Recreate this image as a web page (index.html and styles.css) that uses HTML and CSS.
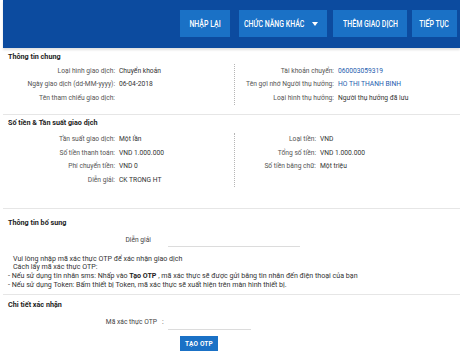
FILE: index.html
```html
<!DOCTYPE html>
<html lang="vi">
<head>
    <meta charset="UTF-8">
    <meta name="viewport" content="width=device-width, initial-scale=1.0">
    <title>Xác nhận giao dịch</title>
    <link rel="stylesheet" href="styles.css">
</head>
<body>
    <div class="toolbar">
        <button class="btn btn-reset"><span class="btn-text">NHẬP LẠI</span></button>
        <button class="btn btn-menu"><span class="btn-text">CHỨC NĂNG KHÁC</span>
            <svg class="caret" width="6" height="4" viewBox="0 0 6 4"><path d="M0 0h6L3 4z" fill="#fff"/></svg>
        </button>
        <button class="btn btn-add"><span class="btn-text">THÊM GIAO DỊCH</span></button>
        <button class="btn btn-next"><span class="btn-text">TIẾP TỤC</span></button>
    </div>

    <div class="content">
        <div class="section section-general">
            <h2 class="section-title">Thông tin chung</h2>
            <div class="info-grid">
                <div class="info-col">
                    <div class="row"><span class="label">Loại hình giao dịch:</span><span class="value">Chuyển khoản</span></div>
                    <div class="row"><span class="label">Ngày giao dịch (dd-MM-yyyy):</span><span class="value">06-04-2018</span></div>
                    <div class="row"><span class="label">Tên tham chiếu giao dịch:</span><span class="value"></span></div>
                </div>
                <div class="info-col info-col-right">
                    <div class="row"><span class="label">Tài khoản chuyển:</span><span class="value link">060003059319</span></div>
                    <div class="row"><span class="label">Tên gợi nhớ Người thụ hưởng:</span><span class="value link">HO THI THANH BINH</span></div>
                    <div class="row"><span class="label">Loại hình thụ hưởng:</span><span class="value">Người thụ hưởng đã lưu</span></div>
                </div>
            </div>
        </div>

        <div class="section section-amount">
            <h2 class="section-title">Số tiền &amp; Tần suất giao dịch</h2>
            <div class="info-grid">
                <div class="info-col">
                    <div class="row"><span class="label">Tần suất giao dịch:</span><span class="value">Một lần</span></div>
                    <div class="row"><span class="label">Số tiền thanh toán:</span><span class="value">VND 1.000.000</span></div>
                    <div class="row"><span class="label">Phí chuyển tiền:</span><span class="value">VND 0</span></div>
                    <div class="row"><span class="label">Diễn giải:</span><span class="value">CK TRONG HT</span></div>
                </div>
                <div class="info-col info-col-right">
                    <div class="row"><span class="label">Loại tiền:</span><span class="value">VND</span></div>
                    <div class="row"><span class="label">Tổng số tiền:</span><span class="value">VND 1.000.000</span></div>
                    <div class="row"><span class="label">Số tiền bằng chữ:</span><span class="value">Một triệu</span></div>
                </div>
            </div>
        </div>

        <div class="section section-extra">
            <h2 class="section-title">Thông tin bổ sung</h2>
            <div class="field-row">
                <label class="field-label extra-label">Diễn giải</label>
                <input class="field-input extra-input" type="text">
            </div>
            <div class="note">
                <p class="indent">Vui lòng nhập mã xác thực OTP để xác nhận giao dịch</p>
                <p class="indent">Cách lấy mã xác thực OTP:</p>
                <p>- Nếu sử dụng tin nhắn sms: Nhấp vào <b>Tạo OTP</b> , mã xác thực sẽ được gửi bằng tin nhắn đến điện thoại của bạn</p>
                <p>- Nếu sử dụng Token: Bấm thiết bị Token, mã xác thực sẽ xuất hiện trên màn hình thiết bị.</p>
            </div>
        </div>

        <div class="section section-confirm">
            <h2 class="section-title">Chi tiết xác nhận</h2>
            <div class="field-row">
                <label class="field-label otp-label">Mã xác thực OTP</label>
                <span class="colon">:</span>
                <input class="field-input otp-input" type="text">
            </div>
            <button class="btn-otp">TẠO OTP</button>
        </div>
    </div>
</body>
</html>
```

FILE: styles.css
```css
* {
    margin: 0;
    padding: 0;
    box-sizing: border-box;
}

body {
    font-family: Roboto, 'Liberation Sans', sans-serif;
    font-size: 6.7px;
    color: #333;
    background-color: #fff;
    overflow: hidden;
}

.toolbar {
    height: 48px;
    margin-left: 3px;
    background-color: #0c4b9f;
    display: flex;
    justify-content: flex-end;
    align-items: center;
    padding-right: 3px;
    box-shadow: 0 2px 2px rgba(0, 0, 0, 0.12);
}

.btn {
    height: 27px;
    margin-top: -1px;
    border: none;
    background-color: #1a71c6;
    color: #fff;
    font-family: Roboto, sans-serif;
    font-size: 8.5px;
    font-weight: 500;
    display: flex;
    justify-content: center;
    align-items: center;
    white-space: nowrap;
}

/* the toolbar font is a condensed face */
.btn-text {
    display: inline-block;
    transform: scaleX(0.82);
}

.btn-reset {
    width: 50px;
    margin-right: 9px;
}

.btn-menu {
    width: 88px;
    margin-right: 6px;
    justify-content: flex-start;
    padding-left: 5px;
    padding-right: 9px;
}

.btn-menu .btn-text {
    transform-origin: left center;
    margin-right: -14px;
}

.btn-menu .caret {
    flex-shrink: 0;
    margin-left: auto;
}

.btn-add {
    width: 74px;
    margin-right: 5px;
}

.btn-next {
    width: 45px;
}

.content {
    margin-left: 3px;
}

.section {
    border-bottom: 1px solid #e6e6e6;
}

.section-title {
    font-size: 7.2px;
    font-weight: 700;
    color: #222;
    line-height: 10px;
    padding-left: 5px;
}

.section-general {
    padding-top: 4px;
    padding-bottom: 8px;
}

.section-amount {
    padding-top: 3px;
}

.section-extra {
    padding-top: 9px;
    padding-bottom: 1px;
}

.section-confirm {
    padding-top: 5px;
    border-bottom: none;
}

.info-grid {
    display: grid;
    grid-template-columns: 231px 1fr;
    margin-top: 1px;
}

.section-amount .info-grid {
    padding-top: 4px;
    padding-bottom: 21px;
}

.section-general .info-grid {
    padding-top: 1px;
    padding-bottom: 1px;
}

.info-col-right {
    border-left: 1px dotted #b5b5b5;
}

.row {
    display: flex;
    height: 13.5px;
    align-items: center;
    gap: 4px;
    white-space: nowrap;
}

.label {
    width: 112px;
    text-align: right;
    color: #555;
}

.section-general .info-col-right .label {
    width: 99px;
}

.section-amount .info-col-right .label {
    width: 81px;
}

.value {
    color: #333;
}

.link {
    color: #1c5cae;
}

.field-row {
    display: flex;
    align-items: flex-end;
    white-space: nowrap;
}

.field-label {
    text-align: right;
    color: #444;
    line-height: 10px;
}

.field-input {
    border: none;
    border-bottom: 1px solid #dcdcdc;
    height: 10px;
    background: transparent;
    outline: none;
}

.extra-label {
    width: 148px;
    margin-right: 17px;
}

.extra-input {
    width: 132px;
    margin-bottom: -2px;
}

.section-extra .field-row {
    margin-top: 7px;
}

.note {
    margin-top: 10px;
    padding-left: 5px;
    padding-bottom: 4px;
    font-size: 7.1px;
    color: #333;
    line-height: 8.7px;
}

.note .indent {
    padding-left: 5px;
}

.note b {
    font-weight: 700;
    color: #222;
}

.section-confirm .field-row {
    margin-top: 7px;
}

.otp-label {
    width: 154px;
}

.colon {
    margin-left: 5px;
    color: #444;
    line-height: 10px;
}

.otp-input {
    width: 83px;
    margin-left: 4px;
    margin-bottom: -3px;
}

.btn-otp {
    display: block;
    margin-top: 9px;
    margin-left: 177px;
    width: 38px;
    height: 16px;
    border: none;
    background-color: #1a71c6;
    color: #fff;
    font-family: Roboto, sans-serif;
    font-size: 6.5px;
    font-weight: 700;
    letter-spacing: 0.2px;
}
```
